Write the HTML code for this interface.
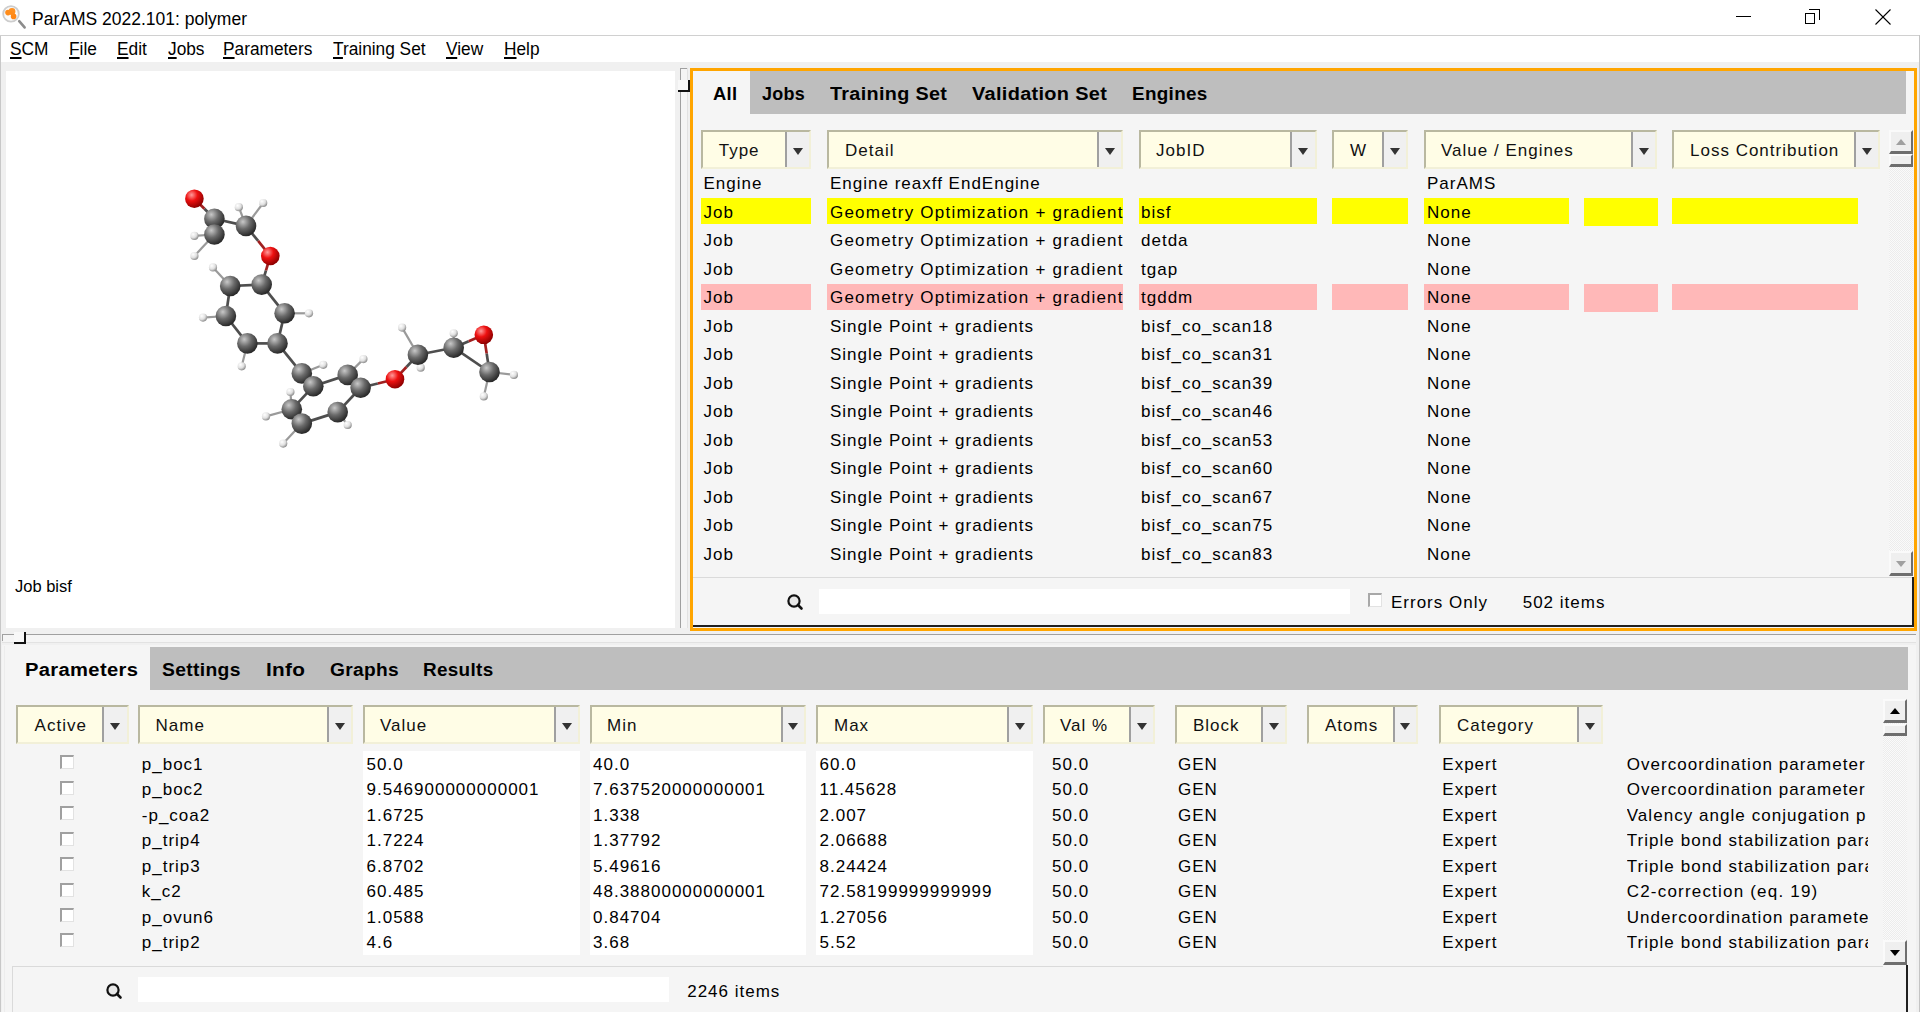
<!DOCTYPE html>
<html><head><meta charset="utf-8"><title>ParAMS</title>
<style>
html,body{margin:0;padding:0;width:1920px;height:1012px;overflow:hidden;background:#fff;font-family:"Liberation Sans", sans-serif;}
body>div,body>svg{position:absolute;}
div{position:absolute;}
.t{white-space:nowrap;}
u{text-underline-offset:1.5px;text-decoration-thickness:1.6px;}
.hd{background:#fffde6;border-top:2px solid #b9b8a0;border-left:2px solid #b9b8a0;border-right:2px solid #f2f0d8;border-bottom:2px solid #f2f0d8;box-sizing:border-box;}
.dd{background:#f0f0f0;border-left:2px solid #a0a0a0;box-sizing:border-box;}
.tri{width:0;height:0;border-left:5px solid transparent;border-right:5px solid transparent;border-top:7px solid #333;}
.sb{background:#efefef;border-top:2px solid #fafafa;border-left:2px solid #fafafa;border-right:2px solid #6e6e6e;border-bottom:3px solid #6e6e6e;box-sizing:border-box;}
</style></head><body>

<div style="left:0px;top:0px;width:1920px;height:35px;background:#fff"></div>
<div style="left:0px;top:35px;width:1920px;height:1px;background:#d0d0d0"></div>
<svg style="position:absolute;left:0;top:0" width="32" height="35" viewBox="0 0 32 35">
<circle cx="11" cy="13.9" r="7.8" fill="#fafafa" stroke="#cdcdcd" stroke-width="1.8"/>
<circle cx="8" cy="12.6" r="2.8" fill="#ff8c1a"/>
<circle cx="12" cy="11.4" r="3.4" fill="#ff9020"/>
<circle cx="13.6" cy="16.4" r="2.8" fill="#ff8614"/>
<path d="M8 12 L12 11 L14 16 L11 15Z" fill="#ff8c1a"/>
<line x1="19.2" y1="21.2" x2="24.6" y2="27.4" stroke="#8c8c8c" stroke-width="2.6" stroke-linecap="round"/>
</svg>
<div class="t" style="left:32px;top:10.69px;font-size:17.5px;line-height:17.5px;letter-spacing:0px;font-weight:normal;color:#000;">ParAMS 2022.101: polymer</div>
<div style="left:1736px;top:16px;width:15px;height:1px;background:#000"></div>
<div style="left:1805px;top:12.5px;width:10px;height:11px;border:1px solid #000;background:#fff;box-sizing:border-box"></div>
<div style="left:1809px;top:9px;width:11px;height:11px;border-top:1px solid #000;border-right:1px solid #000;box-sizing:border-box"></div>
<svg style="position:absolute;left:1875px;top:9px" width="16" height="16" viewBox="0 0 16 16">
<line x1="0.5" y1="0.5" x2="15.5" y2="15.5" stroke="#000" stroke-width="1.1"/>
<line x1="15.5" y1="0.5" x2="0.5" y2="15.5" stroke="#000" stroke-width="1.1"/></svg>
<div style="left:0px;top:36px;width:1920px;height:976px;background:#f0f0f0"></div>
<div style="left:0px;top:36px;width:1px;height:976px;background:#c8c8c8"></div>
<div style="left:1919px;top:35px;width:1px;height:977px;background:#c4c4c4"></div>
<div style="left:1px;top:36px;width:1918px;height:26px;background:#fff"></div>
<div class="t" style="left:10.2px;top:40.07px;font-size:18.7px;line-height:18.7px;letter-spacing:0px;font-weight:normal;color:#000;transform:scaleX(0.925);transform-origin:0 0;"><u>S</u>CM</div>
<div class="t" style="left:69.4px;top:40.07px;font-size:18.7px;line-height:18.7px;letter-spacing:0px;font-weight:normal;color:#000;transform:scaleX(0.925);transform-origin:0 0;"><u>F</u>ile</div>
<div class="t" style="left:117.2px;top:40.07px;font-size:18.7px;line-height:18.7px;letter-spacing:0px;font-weight:normal;color:#000;transform:scaleX(0.925);transform-origin:0 0;"><u>E</u>dit</div>
<div class="t" style="left:167.7px;top:40.07px;font-size:18.7px;line-height:18.7px;letter-spacing:0px;font-weight:normal;color:#000;transform:scaleX(0.925);transform-origin:0 0;"><u>J</u>obs</div>
<div class="t" style="left:223.1px;top:40.07px;font-size:18.7px;line-height:18.7px;letter-spacing:0px;font-weight:normal;color:#000;transform:scaleX(0.925);transform-origin:0 0;"><u>P</u>arameters</div>
<div class="t" style="left:333px;top:40.07px;font-size:18.7px;line-height:18.7px;letter-spacing:0px;font-weight:normal;color:#000;transform:scaleX(0.925);transform-origin:0 0;"><u>T</u>raining Set</div>
<div class="t" style="left:445.6px;top:40.07px;font-size:18.7px;line-height:18.7px;letter-spacing:0px;font-weight:normal;color:#000;transform:scaleX(0.925);transform-origin:0 0;"><u>V</u>iew</div>
<div class="t" style="left:504px;top:40.07px;font-size:18.7px;line-height:18.7px;letter-spacing:0px;font-weight:normal;color:#000;transform:scaleX(0.925);transform-origin:0 0;"><u>H</u>elp</div>
<div style="left:6px;top:71px;width:669px;height:557px;background:#fff"></div>
<div class="t" style="left:15px;top:577.53px;font-size:16.5px;line-height:16.5px;letter-spacing:0px;font-weight:normal;color:#000;">Job bisf</div>
<svg style="position:absolute;left:0;top:0" width="680" height="630" viewBox="0 0 680 630">
<defs><radialGradient id="gc" cx="35%" cy="30%" r="70%"><stop offset="0" stop-color="#c8c8c8"/><stop offset="0.5" stop-color="#6a6a6a"/><stop offset="1" stop-color="#2a2a2a"/></radialGradient>
<radialGradient id="go" cx="35%" cy="30%" r="70%"><stop offset="0" stop-color="#ff9a9a"/><stop offset="0.45" stop-color="#ee1010"/><stop offset="1" stop-color="#900000"/></radialGradient>
<radialGradient id="gh" cx="35%" cy="30%" r="70%"><stop offset="0" stop-color="#ffffff"/><stop offset="0.6" stop-color="#e0e0e0"/><stop offset="1" stop-color="#909090"/></radialGradient></defs>
<line x1="214.4" y1="218.7" x2="204.4" y2="208.7" stroke="#4e4e4e" stroke-width="2.7"/>
<line x1="204.4" y1="208.7" x2="194.4" y2="198.7" stroke="#a02020" stroke-width="2.7"/>
<line x1="214.4" y1="218.7" x2="214.4" y2="234.5" stroke="#4e4e4e" stroke-width="2.7"/>
<line x1="214.4" y1="218.7" x2="246" y2="225.9" stroke="#4e4e4e" stroke-width="2.7"/>
<line x1="246" y1="225.9" x2="258.15" y2="240.95" stroke="#4e4e4e" stroke-width="2.7"/>
<line x1="258.15" y1="240.95" x2="270.3" y2="256" stroke="#a02020" stroke-width="2.7"/>
<line x1="261.7" y1="284.6" x2="266.0" y2="270.3" stroke="#4e4e4e" stroke-width="2.7"/>
<line x1="266.0" y1="270.3" x2="270.3" y2="256" stroke="#a02020" stroke-width="2.7"/>
<line x1="261.7" y1="284.6" x2="230.2" y2="286" stroke="#4e4e4e" stroke-width="2.7"/>
<line x1="230.2" y1="286" x2="225.9" y2="316" stroke="#4e4e4e" stroke-width="2.7"/>
<line x1="225.9" y1="316" x2="247.4" y2="343.4" stroke="#4e4e4e" stroke-width="2.7"/>
<line x1="247.4" y1="343.4" x2="277.5" y2="343.4" stroke="#4e4e4e" stroke-width="2.7"/>
<line x1="277.5" y1="343.4" x2="284.6" y2="313.3" stroke="#4e4e4e" stroke-width="2.7"/>
<line x1="284.6" y1="313.3" x2="261.7" y2="284.6" stroke="#4e4e4e" stroke-width="2.7"/>
<line x1="277.5" y1="343.4" x2="301.8" y2="373.4" stroke="#4e4e4e" stroke-width="2.7"/>
<line x1="301.8" y1="373.4" x2="313.3" y2="386.3" stroke="#4e4e4e" stroke-width="2.7"/>
<line x1="313.3" y1="386.3" x2="347.7" y2="374.9" stroke="#4e4e4e" stroke-width="2.7"/>
<line x1="347.7" y1="374.9" x2="360.6" y2="387.8" stroke="#4e4e4e" stroke-width="2.7"/>
<line x1="360.6" y1="387.8" x2="337.7" y2="412.1" stroke="#4e4e4e" stroke-width="2.7"/>
<line x1="337.7" y1="412.1" x2="301.8" y2="423.6" stroke="#4e4e4e" stroke-width="2.7"/>
<line x1="301.8" y1="423.6" x2="291.8" y2="409.3" stroke="#4e4e4e" stroke-width="2.7"/>
<line x1="291.8" y1="409.3" x2="313.3" y2="386.3" stroke="#4e4e4e" stroke-width="2.7"/>
<line x1="360.6" y1="387.8" x2="377.8" y2="383.5" stroke="#4e4e4e" stroke-width="2.7"/>
<line x1="377.8" y1="383.5" x2="395" y2="379.2" stroke="#a02020" stroke-width="2.7"/>
<line x1="417.9" y1="354.8" x2="406.45" y2="367.0" stroke="#4e4e4e" stroke-width="2.7"/>
<line x1="406.45" y1="367.0" x2="395" y2="379.2" stroke="#a02020" stroke-width="2.7"/>
<line x1="417.9" y1="354.8" x2="453.7" y2="347.7" stroke="#4e4e4e" stroke-width="2.7"/>
<line x1="453.7" y1="347.7" x2="468.75" y2="341.25" stroke="#4e4e4e" stroke-width="2.7"/>
<line x1="468.75" y1="341.25" x2="483.8" y2="334.8" stroke="#a02020" stroke-width="2.7"/>
<line x1="453.7" y1="347.7" x2="489.5" y2="372" stroke="#4e4e4e" stroke-width="2.7"/>
<line x1="489.5" y1="372" x2="486.65" y2="353.4" stroke="#4e4e4e" stroke-width="2.7"/>
<line x1="486.65" y1="353.4" x2="483.8" y2="334.8" stroke="#a02020" stroke-width="2.7"/>
<line x1="238.8" y1="207.2" x2="246" y2="225.9" stroke="#9a9a9a" stroke-width="2.2"/>
<line x1="263.2" y1="203" x2="246" y2="225.9" stroke="#9a9a9a" stroke-width="2.2"/>
<line x1="194.4" y1="235.9" x2="214.4" y2="234.5" stroke="#9a9a9a" stroke-width="2.2"/>
<line x1="194.4" y1="256" x2="214.4" y2="234.5" stroke="#9a9a9a" stroke-width="2.2"/>
<line x1="213" y1="267.4" x2="230.2" y2="286" stroke="#9a9a9a" stroke-width="2.2"/>
<line x1="203" y1="317.6" x2="225.9" y2="316" stroke="#9a9a9a" stroke-width="2.2"/>
<line x1="309" y1="313.3" x2="284.6" y2="313.3" stroke="#9a9a9a" stroke-width="2.2"/>
<line x1="241.7" y1="366.3" x2="247.4" y2="343.4" stroke="#9a9a9a" stroke-width="2.2"/>
<line x1="323.3" y1="364.8" x2="301.8" y2="373.4" stroke="#9a9a9a" stroke-width="2.2"/>
<line x1="363.4" y1="359.1" x2="347.7" y2="374.9" stroke="#9a9a9a" stroke-width="2.2"/>
<line x1="290.4" y1="392" x2="291.8" y2="409.3" stroke="#9a9a9a" stroke-width="2.2"/>
<line x1="266" y1="416.4" x2="291.8" y2="409.3" stroke="#9a9a9a" stroke-width="2.2"/>
<line x1="283.2" y1="443.6" x2="301.8" y2="423.6" stroke="#9a9a9a" stroke-width="2.2"/>
<line x1="347.7" y1="425" x2="337.7" y2="412.1" stroke="#9a9a9a" stroke-width="2.2"/>
<line x1="402.1" y1="327.6" x2="417.9" y2="354.8" stroke="#9a9a9a" stroke-width="2.2"/>
<line x1="420.7" y1="367.7" x2="417.9" y2="354.8" stroke="#9a9a9a" stroke-width="2.2"/>
<line x1="453.7" y1="333.3" x2="453.7" y2="347.7" stroke="#9a9a9a" stroke-width="2.2"/>
<line x1="513.9" y1="374.9" x2="489.5" y2="372" stroke="#9a9a9a" stroke-width="2.2"/>
<line x1="483.8" y1="396.4" x2="489.5" y2="372" stroke="#9a9a9a" stroke-width="2.2"/>
<circle cx="238.8" cy="207.2" r="4.1" fill="url(#gh)"/>
<circle cx="263.2" cy="203" r="4.1" fill="url(#gh)"/>
<circle cx="194.4" cy="235.9" r="4.1" fill="url(#gh)"/>
<circle cx="194.4" cy="256" r="4.1" fill="url(#gh)"/>
<circle cx="213" cy="267.4" r="4.1" fill="url(#gh)"/>
<circle cx="203" cy="317.6" r="4.1" fill="url(#gh)"/>
<circle cx="309" cy="313.3" r="4.1" fill="url(#gh)"/>
<circle cx="241.7" cy="366.3" r="4.1" fill="url(#gh)"/>
<circle cx="323.3" cy="364.8" r="4.1" fill="url(#gh)"/>
<circle cx="363.4" cy="359.1" r="4.1" fill="url(#gh)"/>
<circle cx="290.4" cy="392" r="4.1" fill="url(#gh)"/>
<circle cx="266" cy="416.4" r="4.1" fill="url(#gh)"/>
<circle cx="283.2" cy="443.6" r="4.1" fill="url(#gh)"/>
<circle cx="347.7" cy="425" r="4.1" fill="url(#gh)"/>
<circle cx="402.1" cy="327.6" r="4.1" fill="url(#gh)"/>
<circle cx="420.7" cy="367.7" r="4.1" fill="url(#gh)"/>
<circle cx="453.7" cy="333.3" r="4.1" fill="url(#gh)"/>
<circle cx="513.9" cy="374.9" r="4.1" fill="url(#gh)"/>
<circle cx="483.8" cy="396.4" r="4.1" fill="url(#gh)"/>
<circle cx="214.4" cy="218.7" r="10.3" fill="url(#gc)"/>
<circle cx="214.4" cy="234.5" r="10.3" fill="url(#gc)"/>
<circle cx="246" cy="225.9" r="10.3" fill="url(#gc)"/>
<circle cx="261.7" cy="284.6" r="10.3" fill="url(#gc)"/>
<circle cx="230.2" cy="286" r="10.3" fill="url(#gc)"/>
<circle cx="225.9" cy="316" r="10.3" fill="url(#gc)"/>
<circle cx="247.4" cy="343.4" r="10.3" fill="url(#gc)"/>
<circle cx="277.5" cy="343.4" r="10.3" fill="url(#gc)"/>
<circle cx="284.6" cy="313.3" r="10.3" fill="url(#gc)"/>
<circle cx="301.8" cy="373.4" r="10.3" fill="url(#gc)"/>
<circle cx="313.3" cy="386.3" r="10.3" fill="url(#gc)"/>
<circle cx="291.8" cy="409.3" r="10.3" fill="url(#gc)"/>
<circle cx="301.8" cy="423.6" r="10.3" fill="url(#gc)"/>
<circle cx="337.7" cy="412.1" r="10.3" fill="url(#gc)"/>
<circle cx="347.7" cy="374.9" r="10.3" fill="url(#gc)"/>
<circle cx="360.6" cy="387.8" r="10.3" fill="url(#gc)"/>
<circle cx="417.9" cy="354.8" r="10.3" fill="url(#gc)"/>
<circle cx="453.7" cy="347.7" r="10.3" fill="url(#gc)"/>
<circle cx="489.5" cy="372" r="10.3" fill="url(#gc)"/>
<circle cx="194.4" cy="198.7" r="9.3" fill="url(#go)"/>
<circle cx="270.3" cy="256" r="9.3" fill="url(#go)"/>
<circle cx="395" cy="379.2" r="9.3" fill="url(#go)"/>
<circle cx="483.8" cy="334.8" r="9.3" fill="url(#go)"/>
</svg>
<div style="left:681px;top:69px;width:6px;height:559px;background:#f5f5f5"></div>
<div style="left:680px;top:68px;width:1px;height:560px;background:#a0a0a0"></div>
<div style="left:680px;top:68px;width:7px;height:1px;background:#a0a0a0"></div>
<div style="left:687px;top:68px;width:1px;height:560px;background:#e2e2e2"></div>
<div style="left:678px;top:80px;width:12px;height:12px;background:#f8f8f8;border-right:2px solid #111;border-bottom:2px solid #111;box-sizing:border-box"></div>
<div style="left:3px;top:635px;width:1913px;height:7px;background:#f5f5f5"></div>
<div style="left:2px;top:634px;width:1914px;height:1px;background:#a0a0a0"></div>
<div style="left:2px;top:634px;width:1px;height:7px;background:#a0a0a0"></div>
<div style="left:2px;top:642px;width:1914px;height:1px;background:#e2e2e2"></div>
<div style="left:14px;top:632px;width:12px;height:12px;background:#f8f8f8;border-right:2px solid #111;border-bottom:2px solid #111;box-sizing:border-box"></div>
<div style="left:690px;top:68px;width:1227px;height:563px;background:#f5f5f5;border:3px solid #ffa500;box-sizing:border-box"></div>
<div style="left:750px;top:71px;width:1156px;height:43px;background:#bebebe"></div>
<div class="t" style="left:712.6px;top:85.16px;font-size:18px;line-height:18px;letter-spacing:0.3px;font-weight:bold;color:#000;transform:scaleX(1.0209);transform-origin:0 0;">All</div>
<div class="t" style="left:761.9px;top:85.16px;font-size:18px;line-height:18px;letter-spacing:0.3px;font-weight:bold;color:#000;transform:scaleX(0.9970);transform-origin:0 0;">Jobs</div>
<div class="t" style="left:830.3px;top:85.16px;font-size:18px;line-height:18px;letter-spacing:0.3px;font-weight:bold;color:#000;transform:scaleX(1.0991);transform-origin:0 0;">Training Set</div>
<div class="t" style="left:972px;top:85.16px;font-size:18px;line-height:18px;letter-spacing:0.3px;font-weight:bold;color:#000;transform:scaleX(1.1060);transform-origin:0 0;">Validation Set</div>
<div class="t" style="left:1131.9px;top:85.16px;font-size:18px;line-height:18px;letter-spacing:0.3px;font-weight:bold;color:#000;transform:scaleX(1.0481);transform-origin:0 0;">Engines</div>
<div class="hd" style="left:701px;top:130px;width:110px;height:39px"></div>
<div class="dd" style="left:785px;top:132px;width:24px;height:35px"></div>
<div class="tri" style="left:792.5px;top:147.7px"></div>
<div class="t" style="left:718.7px;top:142.21px;font-size:17px;line-height:17px;letter-spacing:1.0px;font-weight:normal;color:#111;">Type</div>
<div class="hd" style="left:827px;top:130px;width:296px;height:39px"></div>
<div class="dd" style="left:1097px;top:132px;width:24px;height:35px"></div>
<div class="tri" style="left:1104.5px;top:147.7px"></div>
<div class="t" style="left:845px;top:142.21px;font-size:17px;line-height:17px;letter-spacing:1.0px;font-weight:normal;color:#111;">Detail</div>
<div class="hd" style="left:1139px;top:130px;width:178px;height:39px"></div>
<div class="dd" style="left:1290px;top:132px;width:25px;height:35px"></div>
<div class="tri" style="left:1298.0px;top:147.7px"></div>
<div class="t" style="left:1156px;top:142.21px;font-size:17px;line-height:17px;letter-spacing:1.0px;font-weight:normal;color:#111;">JobID</div>
<div class="hd" style="left:1332px;top:130px;width:76px;height:39px"></div>
<div class="dd" style="left:1382px;top:132px;width:24px;height:35px"></div>
<div class="tri" style="left:1389.5px;top:147.7px"></div>
<div class="t" style="left:1350px;top:142.21px;font-size:17px;line-height:17px;letter-spacing:1.0px;font-weight:normal;color:#111;">W</div>
<div class="hd" style="left:1424px;top:130px;width:233px;height:39px"></div>
<div class="dd" style="left:1631px;top:132px;width:24px;height:35px"></div>
<div class="tri" style="left:1638.5px;top:147.7px"></div>
<div class="t" style="left:1441px;top:142.21px;font-size:17px;line-height:17px;letter-spacing:1.0px;font-weight:normal;color:#111;">Value / Engines</div>
<div class="hd" style="left:1672px;top:130px;width:208px;height:39px"></div>
<div class="dd" style="left:1854px;top:132px;width:24px;height:35px"></div>
<div class="tri" style="left:1861.5px;top:147.7px"></div>
<div class="t" style="left:1690px;top:142.21px;font-size:17px;line-height:17px;letter-spacing:1.0px;font-weight:normal;color:#111;">Loss Contribution</div>
<div class="t" style="left:703.5px;top:175.31px;font-size:17px;line-height:17px;letter-spacing:1.0px;font-weight:normal;color:#000;">Engine</div>
<div class="t" style="left:830px;top:175.31px;font-size:17px;line-height:17px;letter-spacing:1.0px;font-weight:normal;color:#000;">Engine reaxff EndEngine</div>
<div class="t" style="left:1427px;top:175.31px;font-size:17px;line-height:17px;letter-spacing:1.0px;font-weight:normal;color:#000;">ParAMS</div>
<div style="left:701px;top:198px;width:110px;height:26px;background:#ffff00"></div>
<div style="left:827px;top:198px;width:296px;height:26px;background:#ffff00"></div>
<div style="left:1139px;top:198px;width:178px;height:26px;background:#ffff00"></div>
<div style="left:1332px;top:198px;width:76px;height:26px;background:#ffff00"></div>
<div style="left:1424px;top:198px;width:145px;height:26px;background:#ffff00"></div>
<div style="left:1584px;top:198px;width:74px;height:28px;background:#ffff00"></div>
<div style="left:1672px;top:198px;width:186px;height:26px;background:#ffff00"></div>
<div class="t" style="left:703.5px;top:203.80px;font-size:17px;line-height:17px;letter-spacing:1.0px;font-weight:normal;color:#000;">Job</div>
<div class="t" style="left:830px;top:203.80px;font-size:17px;line-height:17px;letter-spacing:1.22px;font-weight:normal;color:#000;">Geometry Optimization + gradient</div>
<div class="t" style="left:1141px;top:203.80px;font-size:17px;line-height:17px;letter-spacing:1.0px;font-weight:normal;color:#000;">bisf</div>
<div class="t" style="left:1427px;top:203.80px;font-size:17px;line-height:17px;letter-spacing:1.0px;font-weight:normal;color:#000;">None</div>
<div class="t" style="left:703.5px;top:232.29px;font-size:17px;line-height:17px;letter-spacing:1.0px;font-weight:normal;color:#000;">Job</div>
<div class="t" style="left:830px;top:232.29px;font-size:17px;line-height:17px;letter-spacing:1.22px;font-weight:normal;color:#000;">Geometry Optimization + gradient</div>
<div class="t" style="left:1141px;top:232.29px;font-size:17px;line-height:17px;letter-spacing:1.0px;font-weight:normal;color:#000;">detda</div>
<div class="t" style="left:1427px;top:232.29px;font-size:17px;line-height:17px;letter-spacing:1.0px;font-weight:normal;color:#000;">None</div>
<div class="t" style="left:703.5px;top:260.78px;font-size:17px;line-height:17px;letter-spacing:1.0px;font-weight:normal;color:#000;">Job</div>
<div class="t" style="left:830px;top:260.78px;font-size:17px;line-height:17px;letter-spacing:1.22px;font-weight:normal;color:#000;">Geometry Optimization + gradient</div>
<div class="t" style="left:1141px;top:260.78px;font-size:17px;line-height:17px;letter-spacing:1.0px;font-weight:normal;color:#000;">tgap</div>
<div class="t" style="left:1427px;top:260.78px;font-size:17px;line-height:17px;letter-spacing:1.0px;font-weight:normal;color:#000;">None</div>
<div style="left:701px;top:284px;width:110px;height:26px;background:#ffb8b8"></div>
<div style="left:827px;top:284px;width:296px;height:26px;background:#ffb8b8"></div>
<div style="left:1139px;top:284px;width:178px;height:26px;background:#ffb8b8"></div>
<div style="left:1332px;top:284px;width:76px;height:26px;background:#ffb8b8"></div>
<div style="left:1424px;top:284px;width:145px;height:26px;background:#ffb8b8"></div>
<div style="left:1584px;top:284px;width:74px;height:28px;background:#ffb8b8"></div>
<div style="left:1672px;top:284px;width:186px;height:26px;background:#ffb8b8"></div>
<div class="t" style="left:703.5px;top:289.27px;font-size:17px;line-height:17px;letter-spacing:1.0px;font-weight:normal;color:#000;">Job</div>
<div class="t" style="left:830px;top:289.27px;font-size:17px;line-height:17px;letter-spacing:1.22px;font-weight:normal;color:#000;">Geometry Optimization + gradient</div>
<div class="t" style="left:1141px;top:289.27px;font-size:17px;line-height:17px;letter-spacing:1.0px;font-weight:normal;color:#000;">tgddm</div>
<div class="t" style="left:1427px;top:289.27px;font-size:17px;line-height:17px;letter-spacing:1.0px;font-weight:normal;color:#000;">None</div>
<div class="t" style="left:703.5px;top:317.76px;font-size:17px;line-height:17px;letter-spacing:1.0px;font-weight:normal;color:#000;">Job</div>
<div class="t" style="left:830px;top:317.76px;font-size:17px;line-height:17px;letter-spacing:1.0px;font-weight:normal;color:#000;">Single Point + gradients</div>
<div class="t" style="left:1141px;top:317.76px;font-size:17px;line-height:17px;letter-spacing:1.0px;font-weight:normal;color:#000;">bisf_co_scan18</div>
<div class="t" style="left:1427px;top:317.76px;font-size:17px;line-height:17px;letter-spacing:1.0px;font-weight:normal;color:#000;">None</div>
<div class="t" style="left:703.5px;top:346.25px;font-size:17px;line-height:17px;letter-spacing:1.0px;font-weight:normal;color:#000;">Job</div>
<div class="t" style="left:830px;top:346.25px;font-size:17px;line-height:17px;letter-spacing:1.0px;font-weight:normal;color:#000;">Single Point + gradients</div>
<div class="t" style="left:1141px;top:346.25px;font-size:17px;line-height:17px;letter-spacing:1.0px;font-weight:normal;color:#000;">bisf_co_scan31</div>
<div class="t" style="left:1427px;top:346.25px;font-size:17px;line-height:17px;letter-spacing:1.0px;font-weight:normal;color:#000;">None</div>
<div class="t" style="left:703.5px;top:374.74px;font-size:17px;line-height:17px;letter-spacing:1.0px;font-weight:normal;color:#000;">Job</div>
<div class="t" style="left:830px;top:374.74px;font-size:17px;line-height:17px;letter-spacing:1.0px;font-weight:normal;color:#000;">Single Point + gradients</div>
<div class="t" style="left:1141px;top:374.74px;font-size:17px;line-height:17px;letter-spacing:1.0px;font-weight:normal;color:#000;">bisf_co_scan39</div>
<div class="t" style="left:1427px;top:374.74px;font-size:17px;line-height:17px;letter-spacing:1.0px;font-weight:normal;color:#000;">None</div>
<div class="t" style="left:703.5px;top:403.23px;font-size:17px;line-height:17px;letter-spacing:1.0px;font-weight:normal;color:#000;">Job</div>
<div class="t" style="left:830px;top:403.23px;font-size:17px;line-height:17px;letter-spacing:1.0px;font-weight:normal;color:#000;">Single Point + gradients</div>
<div class="t" style="left:1141px;top:403.23px;font-size:17px;line-height:17px;letter-spacing:1.0px;font-weight:normal;color:#000;">bisf_co_scan46</div>
<div class="t" style="left:1427px;top:403.23px;font-size:17px;line-height:17px;letter-spacing:1.0px;font-weight:normal;color:#000;">None</div>
<div class="t" style="left:703.5px;top:431.72px;font-size:17px;line-height:17px;letter-spacing:1.0px;font-weight:normal;color:#000;">Job</div>
<div class="t" style="left:830px;top:431.72px;font-size:17px;line-height:17px;letter-spacing:1.0px;font-weight:normal;color:#000;">Single Point + gradients</div>
<div class="t" style="left:1141px;top:431.72px;font-size:17px;line-height:17px;letter-spacing:1.0px;font-weight:normal;color:#000;">bisf_co_scan53</div>
<div class="t" style="left:1427px;top:431.72px;font-size:17px;line-height:17px;letter-spacing:1.0px;font-weight:normal;color:#000;">None</div>
<div class="t" style="left:703.5px;top:460.21px;font-size:17px;line-height:17px;letter-spacing:1.0px;font-weight:normal;color:#000;">Job</div>
<div class="t" style="left:830px;top:460.21px;font-size:17px;line-height:17px;letter-spacing:1.0px;font-weight:normal;color:#000;">Single Point + gradients</div>
<div class="t" style="left:1141px;top:460.21px;font-size:17px;line-height:17px;letter-spacing:1.0px;font-weight:normal;color:#000;">bisf_co_scan60</div>
<div class="t" style="left:1427px;top:460.21px;font-size:17px;line-height:17px;letter-spacing:1.0px;font-weight:normal;color:#000;">None</div>
<div class="t" style="left:703.5px;top:488.70px;font-size:17px;line-height:17px;letter-spacing:1.0px;font-weight:normal;color:#000;">Job</div>
<div class="t" style="left:830px;top:488.70px;font-size:17px;line-height:17px;letter-spacing:1.0px;font-weight:normal;color:#000;">Single Point + gradients</div>
<div class="t" style="left:1141px;top:488.70px;font-size:17px;line-height:17px;letter-spacing:1.0px;font-weight:normal;color:#000;">bisf_co_scan67</div>
<div class="t" style="left:1427px;top:488.70px;font-size:17px;line-height:17px;letter-spacing:1.0px;font-weight:normal;color:#000;">None</div>
<div class="t" style="left:703.5px;top:517.19px;font-size:17px;line-height:17px;letter-spacing:1.0px;font-weight:normal;color:#000;">Job</div>
<div class="t" style="left:830px;top:517.19px;font-size:17px;line-height:17px;letter-spacing:1.0px;font-weight:normal;color:#000;">Single Point + gradients</div>
<div class="t" style="left:1141px;top:517.19px;font-size:17px;line-height:17px;letter-spacing:1.0px;font-weight:normal;color:#000;">bisf_co_scan75</div>
<div class="t" style="left:1427px;top:517.19px;font-size:17px;line-height:17px;letter-spacing:1.0px;font-weight:normal;color:#000;">None</div>
<div class="t" style="left:703.5px;top:545.68px;font-size:17px;line-height:17px;letter-spacing:1.0px;font-weight:normal;color:#000;">Job</div>
<div class="t" style="left:830px;top:545.68px;font-size:17px;line-height:17px;letter-spacing:1.0px;font-weight:normal;color:#000;">Single Point + gradients</div>
<div class="t" style="left:1141px;top:545.68px;font-size:17px;line-height:17px;letter-spacing:1.0px;font-weight:normal;color:#000;">bisf_co_scan83</div>
<div class="t" style="left:1427px;top:545.68px;font-size:17px;line-height:17px;letter-spacing:1.0px;font-weight:normal;color:#000;">None</div>
<div style="left:1889px;top:130px;width:24px;height:446px;background:repeating-conic-gradient(#ececec 0 25%,#fafafa 0 50%) 0 0/2px 2px"></div>
<div class="sb" style="left:1889px;top:130px;width:24px;height:24px"></div>
<div style="left:1895.5px;top:138.5px;width:0;height:0;border-left:5.5px solid transparent;border-right:5.5px solid transparent;border-bottom:6px solid #a0a0a0"></div>
<div class="sb" style="left:1889px;top:154px;width:24px;height:13px"></div>
<div class="sb" style="left:1889px;top:551px;width:24px;height:25px"></div>
<div style="left:1895.5px;top:561.0px;width:0;height:0;border-left:5.5px solid transparent;border-right:5.5px solid transparent;border-top:6px solid #a0a0a0"></div>
<div style="left:693px;top:577px;width:1220px;height:1px;background:#dadada"></div>
<div style="left:693px;top:625px;width:1221px;height:2px;background:#202020"></div>
<div style="left:1912px;top:577px;width:2px;height:50px;background:#202020"></div>
<svg style="position:absolute;left:785px;top:592px" width="20" height="20" viewBox="0 0 20 20">
<circle cx="9" cy="9" r="5.6" fill="#e8e8e8" stroke="#111" stroke-width="2.2"/>
<line x1="13" y1="13" x2="16.5" y2="16.5" stroke="#111" stroke-width="2.6" stroke-linecap="round"/></svg>
<div style="left:819px;top:589px;width:531px;height:25px;background:#fff"></div>
<div style="left:1368px;top:593px;width:14px;height:14px;background:#fff;border-top:2px solid #a8a8a8;border-left:2px solid #a8a8a8;border-right:1px solid #e2e2e2;border-bottom:1px solid #e2e2e2;box-sizing:border-box"></div>
<div class="t" style="left:1391px;top:593.91px;font-size:17px;line-height:17px;letter-spacing:1.0px;font-weight:normal;color:#000;">Errors Only</div>
<div class="t" style="left:1522.7px;top:593.91px;font-size:17px;line-height:17px;letter-spacing:1.0px;font-weight:normal;color:#000;">502 items</div>
<div style="left:2px;top:645px;width:1914px;height:367px;background:#f5f5f5"></div>
<div style="left:150px;top:647px;width:1758px;height:43px;background:#bebebe"></div>
<div class="t" style="left:24.5px;top:661.16px;font-size:18px;line-height:18px;letter-spacing:0.3px;font-weight:bold;color:#000;transform:scaleX(1.1209);transform-origin:0 0;">Parameters</div>
<div class="t" style="left:161.9px;top:661.16px;font-size:18px;line-height:18px;letter-spacing:0.3px;font-weight:bold;color:#000;transform:scaleX(1.0718);transform-origin:0 0;">Settings</div>
<div class="t" style="left:265.8px;top:661.16px;font-size:18px;line-height:18px;letter-spacing:0.3px;font-weight:bold;color:#000;transform:scaleX(1.1520);transform-origin:0 0;">Info</div>
<div class="t" style="left:330.3px;top:661.16px;font-size:18px;line-height:18px;letter-spacing:0.3px;font-weight:bold;color:#000;transform:scaleX(1.0643);transform-origin:0 0;">Graphs</div>
<div class="t" style="left:423px;top:661.16px;font-size:18px;line-height:18px;letter-spacing:0.3px;font-weight:bold;color:#000;transform:scaleX(1.0499);transform-origin:0 0;">Results</div>
<div class="hd" style="left:16px;top:705px;width:113px;height:39px"></div>
<div class="dd" style="left:102px;top:707px;width:25px;height:35px"></div>
<div class="tri" style="left:110.0px;top:722.7px"></div>
<div class="t" style="left:34.6px;top:717.01px;font-size:17px;line-height:17px;letter-spacing:1.0px;font-weight:normal;color:#111;">Active</div>
<div class="hd" style="left:138px;top:705px;width:215px;height:39px"></div>
<div class="dd" style="left:327px;top:707px;width:24px;height:35px"></div>
<div class="tri" style="left:334.5px;top:722.7px"></div>
<div class="t" style="left:155.5px;top:717.01px;font-size:17px;line-height:17px;letter-spacing:1.0px;font-weight:normal;color:#111;">Name</div>
<div class="hd" style="left:363px;top:705px;width:217px;height:39px"></div>
<div class="dd" style="left:554px;top:707px;width:24px;height:35px"></div>
<div class="tri" style="left:561.5px;top:722.7px"></div>
<div class="t" style="left:380px;top:717.01px;font-size:17px;line-height:17px;letter-spacing:1.0px;font-weight:normal;color:#111;">Value</div>
<div class="hd" style="left:590px;top:705px;width:216px;height:39px"></div>
<div class="dd" style="left:781px;top:707px;width:23px;height:35px"></div>
<div class="tri" style="left:788.0px;top:722.7px"></div>
<div class="t" style="left:607px;top:717.01px;font-size:17px;line-height:17px;letter-spacing:1.0px;font-weight:normal;color:#111;">Min</div>
<div class="hd" style="left:816px;top:705px;width:217px;height:39px"></div>
<div class="dd" style="left:1007px;top:707px;width:24px;height:35px"></div>
<div class="tri" style="left:1014.5px;top:722.7px"></div>
<div class="t" style="left:834px;top:717.01px;font-size:17px;line-height:17px;letter-spacing:1.0px;font-weight:normal;color:#111;">Max</div>
<div class="hd" style="left:1043px;top:705px;width:112px;height:39px"></div>
<div class="dd" style="left:1129px;top:707px;width:24px;height:35px"></div>
<div class="tri" style="left:1136.5px;top:722.7px"></div>
<div class="t" style="left:1060px;top:717.01px;font-size:17px;line-height:17px;letter-spacing:1.0px;font-weight:normal;color:#111;">Val %</div>
<div class="hd" style="left:1175px;top:705px;width:112px;height:39px"></div>
<div class="dd" style="left:1261px;top:707px;width:24px;height:35px"></div>
<div class="tri" style="left:1268.5px;top:722.7px"></div>
<div class="t" style="left:1193px;top:717.01px;font-size:17px;line-height:17px;letter-spacing:1.0px;font-weight:normal;color:#111;">Block</div>
<div class="hd" style="left:1307px;top:705px;width:111px;height:39px"></div>
<div class="dd" style="left:1393px;top:707px;width:23px;height:35px"></div>
<div class="tri" style="left:1400.0px;top:722.7px"></div>
<div class="t" style="left:1325px;top:717.01px;font-size:17px;line-height:17px;letter-spacing:1.0px;font-weight:normal;color:#111;">Atoms</div>
<div class="hd" style="left:1439px;top:705px;width:164px;height:39px"></div>
<div class="dd" style="left:1577px;top:707px;width:24px;height:35px"></div>
<div class="tri" style="left:1584.5px;top:722.7px"></div>
<div class="t" style="left:1457px;top:717.01px;font-size:17px;line-height:17px;letter-spacing:1.0px;font-weight:normal;color:#111;">Category</div>
<div style="left:363px;top:751px;width:217px;height:204px;background:#fff"></div>
<div style="left:590px;top:751px;width:216px;height:204px;background:#fff"></div>
<div style="left:816px;top:751px;width:217px;height:204px;background:#fff"></div>
<div style="left:60px;top:755px;width:14px;height:14px;background:#fff;border-top:2px solid #a0a0a0;border-left:2px solid #a0a0a0;border-right:1px solid #e2e2e2;border-bottom:1px solid #e2e2e2;box-sizing:border-box"></div>
<div class="t" style="left:141.8px;top:755.81px;font-size:17px;line-height:17px;letter-spacing:1.0px;font-weight:normal;color:#000;">p_boc1</div>
<div class="t" style="left:366.5px;top:755.81px;font-size:17px;line-height:17px;letter-spacing:1.0px;font-weight:normal;color:#000;">50.0</div>
<div class="t" style="left:593px;top:755.81px;font-size:17px;line-height:17px;letter-spacing:1.0px;font-weight:normal;color:#000;">40.0</div>
<div class="t" style="left:819.5px;top:755.81px;font-size:17px;line-height:17px;letter-spacing:1.0px;font-weight:normal;color:#000;">60.0</div>
<div class="t" style="left:1052px;top:755.81px;font-size:17px;line-height:17px;letter-spacing:1.0px;font-weight:normal;color:#000;">50.0</div>
<div class="t" style="left:1178px;top:755.81px;font-size:17px;line-height:17px;letter-spacing:1.0px;font-weight:normal;color:#000;">GEN</div>
<div class="t" style="left:1442.3px;top:755.81px;font-size:17px;line-height:17px;letter-spacing:1.0px;font-weight:normal;color:#000;">Expert</div>
<div class="t" style="left:1626.7px;top:755.81px;font-size:17px;line-height:17px;letter-spacing:1.05px;font-weight:normal;color:#000;width:241px;overflow:hidden;white-space:nowrap">Overcoordination parameter</div>
<div style="left:60px;top:781px;width:14px;height:14px;background:#fff;border-top:2px solid #a0a0a0;border-left:2px solid #a0a0a0;border-right:1px solid #e2e2e2;border-bottom:1px solid #e2e2e2;box-sizing:border-box"></div>
<div class="t" style="left:141.8px;top:781.28px;font-size:17px;line-height:17px;letter-spacing:1.0px;font-weight:normal;color:#000;">p_boc2</div>
<div class="t" style="left:366.5px;top:781.28px;font-size:17px;line-height:17px;letter-spacing:1.0px;font-weight:normal;color:#000;">9.546900000000001</div>
<div class="t" style="left:593px;top:781.28px;font-size:17px;line-height:17px;letter-spacing:1.0px;font-weight:normal;color:#000;">7.637520000000001</div>
<div class="t" style="left:819.5px;top:781.28px;font-size:17px;line-height:17px;letter-spacing:1.0px;font-weight:normal;color:#000;">11.45628</div>
<div class="t" style="left:1052px;top:781.28px;font-size:17px;line-height:17px;letter-spacing:1.0px;font-weight:normal;color:#000;">50.0</div>
<div class="t" style="left:1178px;top:781.28px;font-size:17px;line-height:17px;letter-spacing:1.0px;font-weight:normal;color:#000;">GEN</div>
<div class="t" style="left:1442.3px;top:781.28px;font-size:17px;line-height:17px;letter-spacing:1.0px;font-weight:normal;color:#000;">Expert</div>
<div class="t" style="left:1626.7px;top:781.28px;font-size:17px;line-height:17px;letter-spacing:1.05px;font-weight:normal;color:#000;width:241px;overflow:hidden;white-space:nowrap">Overcoordination parameter</div>
<div style="left:60px;top:806px;width:14px;height:14px;background:#fff;border-top:2px solid #a0a0a0;border-left:2px solid #a0a0a0;border-right:1px solid #e2e2e2;border-bottom:1px solid #e2e2e2;box-sizing:border-box"></div>
<div class="t" style="left:141.8px;top:806.75px;font-size:17px;line-height:17px;letter-spacing:1.0px;font-weight:normal;color:#000;">-p_coa2</div>
<div class="t" style="left:366.5px;top:806.75px;font-size:17px;line-height:17px;letter-spacing:1.0px;font-weight:normal;color:#000;">1.6725</div>
<div class="t" style="left:593px;top:806.75px;font-size:17px;line-height:17px;letter-spacing:1.0px;font-weight:normal;color:#000;">1.338</div>
<div class="t" style="left:819.5px;top:806.75px;font-size:17px;line-height:17px;letter-spacing:1.0px;font-weight:normal;color:#000;">2.007</div>
<div class="t" style="left:1052px;top:806.75px;font-size:17px;line-height:17px;letter-spacing:1.0px;font-weight:normal;color:#000;">50.0</div>
<div class="t" style="left:1178px;top:806.75px;font-size:17px;line-height:17px;letter-spacing:1.0px;font-weight:normal;color:#000;">GEN</div>
<div class="t" style="left:1442.3px;top:806.75px;font-size:17px;line-height:17px;letter-spacing:1.0px;font-weight:normal;color:#000;">Expert</div>
<div class="t" style="left:1626.7px;top:806.75px;font-size:17px;line-height:17px;letter-spacing:1.05px;font-weight:normal;color:#000;width:241px;overflow:hidden;white-space:nowrap">Valency angle conjugation p</div>
<div style="left:60px;top:832px;width:14px;height:14px;background:#fff;border-top:2px solid #a0a0a0;border-left:2px solid #a0a0a0;border-right:1px solid #e2e2e2;border-bottom:1px solid #e2e2e2;box-sizing:border-box"></div>
<div class="t" style="left:141.8px;top:832.22px;font-size:17px;line-height:17px;letter-spacing:1.0px;font-weight:normal;color:#000;">p_trip4</div>
<div class="t" style="left:366.5px;top:832.22px;font-size:17px;line-height:17px;letter-spacing:1.0px;font-weight:normal;color:#000;">1.7224</div>
<div class="t" style="left:593px;top:832.22px;font-size:17px;line-height:17px;letter-spacing:1.0px;font-weight:normal;color:#000;">1.37792</div>
<div class="t" style="left:819.5px;top:832.22px;font-size:17px;line-height:17px;letter-spacing:1.0px;font-weight:normal;color:#000;">2.06688</div>
<div class="t" style="left:1052px;top:832.22px;font-size:17px;line-height:17px;letter-spacing:1.0px;font-weight:normal;color:#000;">50.0</div>
<div class="t" style="left:1178px;top:832.22px;font-size:17px;line-height:17px;letter-spacing:1.0px;font-weight:normal;color:#000;">GEN</div>
<div class="t" style="left:1442.3px;top:832.22px;font-size:17px;line-height:17px;letter-spacing:1.0px;font-weight:normal;color:#000;">Expert</div>
<div class="t" style="left:1626.7px;top:832.22px;font-size:17px;line-height:17px;letter-spacing:1.05px;font-weight:normal;color:#000;width:241px;overflow:hidden;white-space:nowrap">Triple bond stabilization para</div>
<div style="left:60px;top:857px;width:14px;height:14px;background:#fff;border-top:2px solid #a0a0a0;border-left:2px solid #a0a0a0;border-right:1px solid #e2e2e2;border-bottom:1px solid #e2e2e2;box-sizing:border-box"></div>
<div class="t" style="left:141.8px;top:857.69px;font-size:17px;line-height:17px;letter-spacing:1.0px;font-weight:normal;color:#000;">p_trip3</div>
<div class="t" style="left:366.5px;top:857.69px;font-size:17px;line-height:17px;letter-spacing:1.0px;font-weight:normal;color:#000;">6.8702</div>
<div class="t" style="left:593px;top:857.69px;font-size:17px;line-height:17px;letter-spacing:1.0px;font-weight:normal;color:#000;">5.49616</div>
<div class="t" style="left:819.5px;top:857.69px;font-size:17px;line-height:17px;letter-spacing:1.0px;font-weight:normal;color:#000;">8.24424</div>
<div class="t" style="left:1052px;top:857.69px;font-size:17px;line-height:17px;letter-spacing:1.0px;font-weight:normal;color:#000;">50.0</div>
<div class="t" style="left:1178px;top:857.69px;font-size:17px;line-height:17px;letter-spacing:1.0px;font-weight:normal;color:#000;">GEN</div>
<div class="t" style="left:1442.3px;top:857.69px;font-size:17px;line-height:17px;letter-spacing:1.0px;font-weight:normal;color:#000;">Expert</div>
<div class="t" style="left:1626.7px;top:857.69px;font-size:17px;line-height:17px;letter-spacing:1.05px;font-weight:normal;color:#000;width:241px;overflow:hidden;white-space:nowrap">Triple bond stabilization para</div>
<div style="left:60px;top:883px;width:14px;height:14px;background:#fff;border-top:2px solid #a0a0a0;border-left:2px solid #a0a0a0;border-right:1px solid #e2e2e2;border-bottom:1px solid #e2e2e2;box-sizing:border-box"></div>
<div class="t" style="left:141.8px;top:883.16px;font-size:17px;line-height:17px;letter-spacing:1.0px;font-weight:normal;color:#000;">k_c2</div>
<div class="t" style="left:366.5px;top:883.16px;font-size:17px;line-height:17px;letter-spacing:1.0px;font-weight:normal;color:#000;">60.485</div>
<div class="t" style="left:593px;top:883.16px;font-size:17px;line-height:17px;letter-spacing:1.0px;font-weight:normal;color:#000;">48.38800000000001</div>
<div class="t" style="left:819.5px;top:883.16px;font-size:17px;line-height:17px;letter-spacing:1.0px;font-weight:normal;color:#000;">72.58199999999999</div>
<div class="t" style="left:1052px;top:883.16px;font-size:17px;line-height:17px;letter-spacing:1.0px;font-weight:normal;color:#000;">50.0</div>
<div class="t" style="left:1178px;top:883.16px;font-size:17px;line-height:17px;letter-spacing:1.0px;font-weight:normal;color:#000;">GEN</div>
<div class="t" style="left:1442.3px;top:883.16px;font-size:17px;line-height:17px;letter-spacing:1.0px;font-weight:normal;color:#000;">Expert</div>
<div class="t" style="left:1626.7px;top:883.16px;font-size:17px;line-height:17px;letter-spacing:1.2px;font-weight:normal;color:#000;width:241px;overflow:hidden;white-space:nowrap">C2-correction (eq. 19)</div>
<div style="left:60px;top:908px;width:14px;height:14px;background:#fff;border-top:2px solid #a0a0a0;border-left:2px solid #a0a0a0;border-right:1px solid #e2e2e2;border-bottom:1px solid #e2e2e2;box-sizing:border-box"></div>
<div class="t" style="left:141.8px;top:908.63px;font-size:17px;line-height:17px;letter-spacing:1.0px;font-weight:normal;color:#000;">p_ovun6</div>
<div class="t" style="left:366.5px;top:908.63px;font-size:17px;line-height:17px;letter-spacing:1.0px;font-weight:normal;color:#000;">1.0588</div>
<div class="t" style="left:593px;top:908.63px;font-size:17px;line-height:17px;letter-spacing:1.0px;font-weight:normal;color:#000;">0.84704</div>
<div class="t" style="left:819.5px;top:908.63px;font-size:17px;line-height:17px;letter-spacing:1.0px;font-weight:normal;color:#000;">1.27056</div>
<div class="t" style="left:1052px;top:908.63px;font-size:17px;line-height:17px;letter-spacing:1.0px;font-weight:normal;color:#000;">50.0</div>
<div class="t" style="left:1178px;top:908.63px;font-size:17px;line-height:17px;letter-spacing:1.0px;font-weight:normal;color:#000;">GEN</div>
<div class="t" style="left:1442.3px;top:908.63px;font-size:17px;line-height:17px;letter-spacing:1.0px;font-weight:normal;color:#000;">Expert</div>
<div class="t" style="left:1626.7px;top:908.63px;font-size:17px;line-height:17px;letter-spacing:1.05px;font-weight:normal;color:#000;width:241px;overflow:hidden;white-space:nowrap">Undercoordination paramete</div>
<div style="left:60px;top:933px;width:14px;height:14px;background:#fff;border-top:2px solid #a0a0a0;border-left:2px solid #a0a0a0;border-right:1px solid #e2e2e2;border-bottom:1px solid #e2e2e2;box-sizing:border-box"></div>
<div class="t" style="left:141.8px;top:934.10px;font-size:17px;line-height:17px;letter-spacing:1.0px;font-weight:normal;color:#000;">p_trip2</div>
<div class="t" style="left:366.5px;top:934.10px;font-size:17px;line-height:17px;letter-spacing:1.0px;font-weight:normal;color:#000;">4.6</div>
<div class="t" style="left:593px;top:934.10px;font-size:17px;line-height:17px;letter-spacing:1.0px;font-weight:normal;color:#000;">3.68</div>
<div class="t" style="left:819.5px;top:934.10px;font-size:17px;line-height:17px;letter-spacing:1.0px;font-weight:normal;color:#000;">5.52</div>
<div class="t" style="left:1052px;top:934.10px;font-size:17px;line-height:17px;letter-spacing:1.0px;font-weight:normal;color:#000;">50.0</div>
<div class="t" style="left:1178px;top:934.10px;font-size:17px;line-height:17px;letter-spacing:1.0px;font-weight:normal;color:#000;">GEN</div>
<div class="t" style="left:1442.3px;top:934.10px;font-size:17px;line-height:17px;letter-spacing:1.0px;font-weight:normal;color:#000;">Expert</div>
<div class="t" style="left:1626.7px;top:934.10px;font-size:17px;line-height:17px;letter-spacing:1.05px;font-weight:normal;color:#000;width:241px;overflow:hidden;white-space:nowrap">Triple bond stabilization para</div>
<div style="left:1883px;top:699px;width:24px;height:266px;background:repeating-conic-gradient(#ececec 0 25%,#fafafa 0 50%) 0 0/2px 2px"></div>
<div class="sb" style="left:1883px;top:699px;width:24px;height:24px"></div>
<div style="left:1889.5px;top:707.5px;width:0;height:0;border-left:5.5px solid transparent;border-right:5.5px solid transparent;border-bottom:6px solid #000"></div>
<div class="sb" style="left:1883px;top:724px;width:24px;height:12px"></div>
<div class="sb" style="left:1883px;top:940px;width:24px;height:25px"></div>
<div style="left:1889.5px;top:950.0px;width:0;height:0;border-left:5.5px solid transparent;border-right:5.5px solid transparent;border-top:6px solid #000"></div>
<div style="left:12px;top:966px;width:1871px;height:1px;background:#dadada"></div>
<div style="left:12px;top:966px;width:1px;height:46px;background:#dadada"></div>
<div style="left:4px;top:646px;width:1px;height:366px;background:#ededed"></div>
<div style="left:1906px;top:965px;width:2px;height:47px;background:#202020"></div>
<svg style="position:absolute;left:104px;top:981px" width="20" height="20" viewBox="0 0 20 20">
<circle cx="9" cy="9" r="5.6" fill="#e8e8e8" stroke="#111" stroke-width="2.2"/>
<line x1="13" y1="13" x2="16.5" y2="16.5" stroke="#111" stroke-width="2.6" stroke-linecap="round"/></svg>
<div style="left:138px;top:977px;width:531px;height:25px;background:#fff"></div>
<div class="t" style="left:687.2px;top:982.61px;font-size:17px;line-height:17px;letter-spacing:1.0px;font-weight:normal;color:#000;">2246 items</div>
</body></html>
